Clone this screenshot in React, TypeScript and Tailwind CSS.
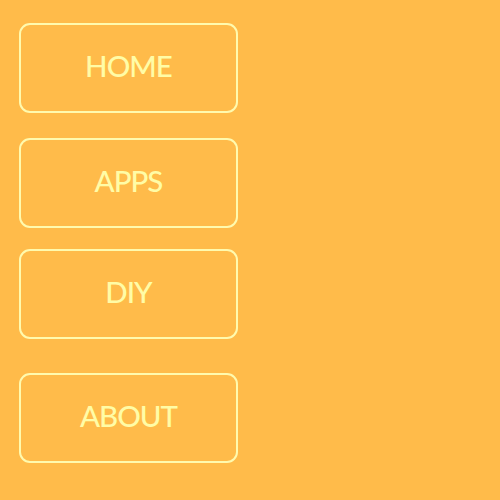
import React from "react";

const items = [
  { label: "HOME", mt: "mt-[23px]" },
  { label: "APPS", mt: "mt-[25px]" },
  { label: "DIY", mt: "mt-[21px]" },
  { label: "ABOUT", mt: "mt-[34px]" },
];

export default function App() {
  return (
    <div className="w-[500px] h-[500px] bg-[#FFBB4A] flex flex-col pl-[19px]" style={{ fontFamily: "Lato, 'Noto Sans', sans-serif" }}>
      {items.map((it) => (
        <div
          key={it.label}
          className={`${it.mt} w-[219px] h-[90px] border-[2.5px] border-[#FFFAAE] rounded-[11px] flex items-center justify-center pb-[4px] text-[#FFFCA6] text-[29.5px] font-medium tracking-[-1px]`}
        >
          {it.label}
        </div>
      ))}
    </div>
  );
}
